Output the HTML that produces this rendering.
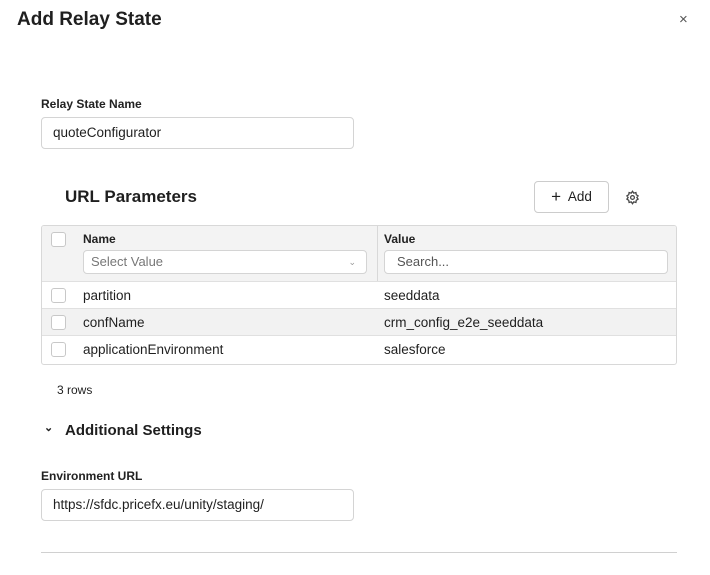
<!DOCTYPE html>
<html><head><style>
*{box-sizing:border-box;margin:0;padding:0}
body{width:710px;height:575px;background:#fff;font-family:"Liberation Sans",sans-serif;color:#1f1f1f;position:relative;overflow:hidden}
.a{position:absolute}
.lbl{font-size:12px;font-weight:bold;color:#222}
.inp{border:1px solid #d4d4d4;border-radius:4px;height:32px;width:313px;font-size:13.5px;padding:0 11px;line-height:30px}
.cb{position:absolute;width:15px;height:15px;border:1px solid #c8c8c8;border-radius:3px;background:#fff;left:9px}
.row{position:absolute;left:0;width:635px;height:28px;border-top:1px solid #e0e0e0;font-size:13.5px;line-height:27px}
</style></head><body>
<div class="a" style="left:17px;top:9px;font-size:19px;font-weight:bold">Add Relay State</div>
<div class="a" style="left:679px;top:11px;font-size:15px;color:#555">×</div>
<div class="a lbl" style="left:41px;top:97px">Relay State Name</div>
<div class="a inp" style="left:41px;top:117px">quoteConfigurator</div>
<div class="a" style="left:65px;top:187px;font-size:17px;font-weight:bold">URL Parameters</div>
<div class="a" style="left:534px;top:181px;width:75px;height:32px;border:1px solid #ccc;border-radius:4px;font-size:13.5px;line-height:30px;text-align:center"><span style="font-size:17px;vertical-align:-1px">+</span>&nbsp; Add</div>
<svg class="a" style="left:625px;top:190px" width="15" height="15" viewBox="0 0 24 24" fill="none" stroke="#444" stroke-width="2"><circle cx="12" cy="12" r="3"/><path d="M12 2l2 3 3.5-1 .5 3.5 3 2-2 2.5 2 2.5-3 2-.5 3.5-3.5-1-2 3-2-3-3.5 1-.5-3.5-3-2 2-2.5-2-2.5 3-2 .5-3.5 3.5 1z"/></svg>
<div class="a" style="left:41px;top:225px;width:636px;height:140px;border:1px solid #d8d8d8;border-radius:3px;overflow:hidden">
 <div class="a" style="left:0;top:0;width:636px;height:55px;background:#f3f3f3"></div>
 <div class="a" style="left:335px;top:0;width:1px;height:55px;background:#d8d8d8"></div>
 <div class="cb" style="top:6px"></div>
 <div class="a lbl" style="left:41px;top:6px">Name</div>
 <div class="a lbl" style="left:342px;top:6px">Value</div>
 <div class="a" style="left:41px;top:24px;width:284px;height:24px;border:1px solid #d4d4d4;border-radius:4px;background:#fff;font-size:13px;color:#777;padding-left:7px;line-height:22px">Select Value<span style="position:absolute;right:10px;font-size:9px;color:#999">&#8964;</span></div>
 <div class="a" style="left:342px;top:24px;width:284px;height:24px;border:1px solid #d4d4d4;border-radius:4px;background:#fff;font-size:13px;color:#555;padding-left:12px;line-height:22px">Search...</div>
 <div class="row" style="top:55px"><div class="cb" style="top:6px"></div><span class="a" style="left:41px">partition</span><span class="a" style="left:342px">seeddata</span></div>
 <div class="row" style="top:82px;background:#f2f2f2"><div class="cb" style="top:6px"></div><span class="a" style="left:41px">confName</span><span class="a" style="left:342px">crm_config_e2e_seeddata</span></div>
 <div class="row" style="top:109px"><div class="cb" style="top:6px"></div><span class="a" style="left:41px">applicationEnvironment</span><span class="a" style="left:342px">salesforce</span></div>
</div>
<div class="a" style="left:57px;top:383px;font-size:12px">3 rows</div>
<div class="a" style="left:44px;top:421px;font-size:11px;font-weight:bold">&#8964;</div>
<div class="a" style="left:65px;top:422px;font-size:15px;font-weight:bold">Additional Settings</div>
<div class="a lbl" style="left:41px;top:469px">Environment URL</div>
<div class="a inp" style="left:41px;top:489px">https://sfdc.pricefx.eu/unity/staging/</div>
<div class="a" style="left:41px;top:552px;width:636px;height:1px;background:#d0d0d0"></div>
</body></html>
